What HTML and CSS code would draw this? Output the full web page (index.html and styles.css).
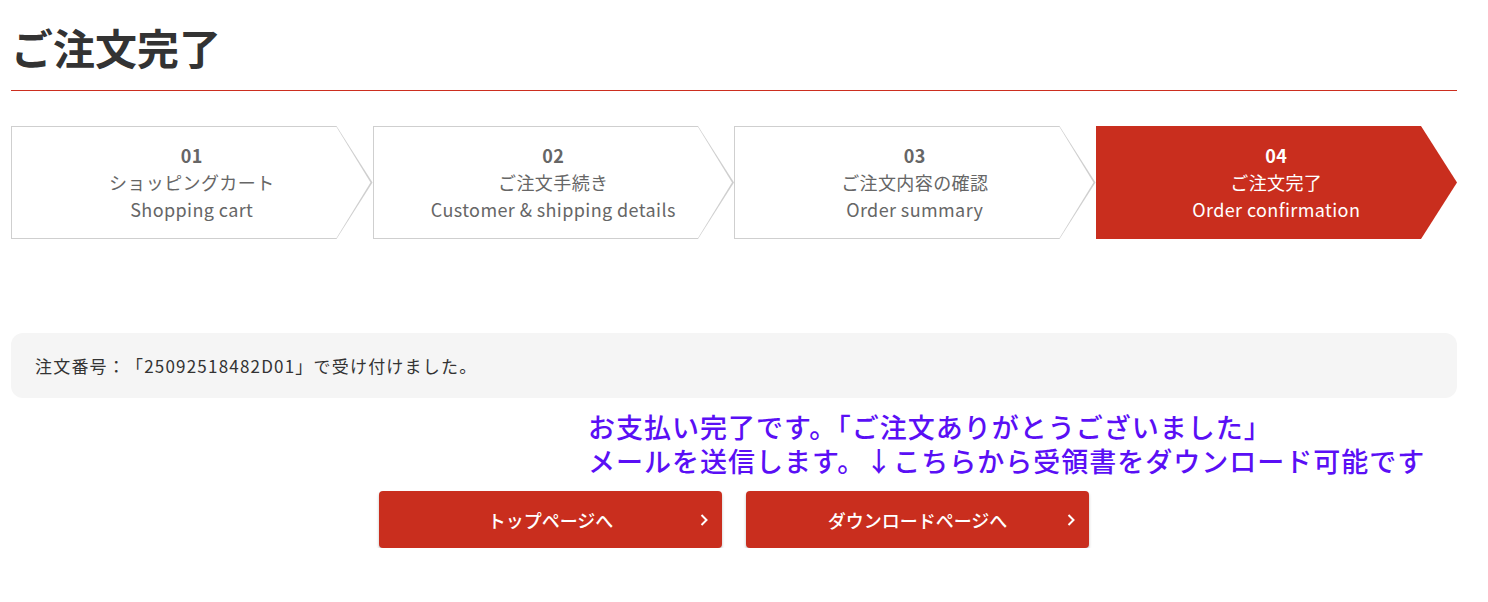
FILE: index.html
```html
<!DOCTYPE html>
<html lang="ja">
<head>
<meta charset="utf-8">
<title>ご注文完了</title>
<link rel="stylesheet" href="styles.css">
</head>
<body>
<main class="page">
  <h1 class="title">ご注文完了</h1>
  <ol class="steps">
    <li class="step">
      <div class="step-inner">
        <span class="step-num">01</span>
        <span class="step-ja">ショッピングカート</span>
        <span class="step-en">Shopping cart</span>
      </div>
    </li>
    <li class="step">
      <div class="step-inner">
        <span class="step-num">02</span>
        <span class="step-ja">ご注文手続き</span>
        <span class="step-en">Customer &amp; shipping details</span>
      </div>
    </li>
    <li class="step">
      <div class="step-inner">
        <span class="step-num">03</span>
        <span class="step-ja">ご注文内容の確認</span>
        <span class="step-en">Order summary</span>
      </div>
    </li>
    <li class="step is-current">
      <div class="step-inner">
        <span class="step-num">04</span>
        <span class="step-ja">ご注文完了</span>
        <span class="step-en">Order confirmation</span>
      </div>
    </li>
  </ol>

  <div class="notice">注文番号：「25092518482D01」で受け付けました。</div>

  <div class="memo">
    <p class="memo-line">お支払い完了です。「ご注文ありがとうございました」</p>
    <p class="memo-line">メールを送信します。↓こちらから受領書をダウンロード可能です</p>
  </div>

  <div class="actions">
    <a class="btn" href="#">トップページへ<span class="chev"><svg viewBox="0 0 10 14" width="10" height="14"><path d="M2.5 2 L7.5 7 L2.5 12" fill="none" stroke="#fff" stroke-width="2"/></svg></span></a>
    <a class="btn" href="#">ダウンロードページへ<span class="chev"><svg viewBox="0 0 10 14" width="10" height="14"><path d="M2.5 2 L7.5 7 L2.5 12" fill="none" stroke="#fff" stroke-width="2"/></svg></span></a>
  </div>
</main>
</body>
</html>
```

FILE: styles.css
```css
* { box-sizing: border-box; }
html, body { margin: 0; padding: 0; background: #fff; }
body {
  font-family: "Noto Sans CJK JP", "Noto Sans", sans-serif;
  color: #333;
}
.page {
  width: 1446px;
  margin-left: 11px;
  padding-top: 17px;
}
.title {
  margin: 0;
  padding: 0 0 14px 0;
  font-size: 42px;
  line-height: 59px;
  font-weight: 700;
  color: #333;
  border-bottom: 1px solid #cc2e1f;
}
.steps {
  list-style: none;
  margin: 35px 0 0;
  padding: 0;
  display: grid;
  grid-template-columns: repeat(4, 1fr);
}
.step {
  height: 113px;
  padding: 1px;
  background: #cfcfcf;
  clip-path: polygon(0 0, calc(100% - 36px) 0, 100% 50%, calc(100% - 36px) 100%, 0 100%);
}
.step-inner {
  height: 100%;
  background: #fff;
  clip-path: polygon(0 0, calc(100% - 35px) 0, calc(100% - 1px) 50%, calc(100% - 35px) 100%, 0 100%);
  display: flex;
  flex-direction: column;
  align-items: center;
  justify-content: center;
  color: #666;
  font-size: 18px;
  line-height: 27px;
  letter-spacing: 0.4px;
}
.step-num { font-weight: 700; }
.step.is-current { background: #c92e1e; }
.step.is-current .step-inner { background: #c92e1e; color: #fff; }

.notice {
  margin-top: 94px;
  height: 65px;
  background: #f5f5f5;
  border-radius: 12px;
  padding: 0 24px;
  display: flex;
  align-items: center;
  font-size: 17px;
  letter-spacing: 1.2px;
  text-spacing-trim: space-all;
  color: #333;
}
.memo {
  margin: 12px 0 0 577px;
  display: flex;
  flex-direction: column;
}
.memo-line {
  margin: 0;
  font-size: 27px;
  line-height: 34px;
  font-weight: 500;
  color: #5a0ff5;
  letter-spacing: 1px;
}
.actions {
  margin-top: 13px;
  display: flex;
  justify-content: center;
  gap: 24px;
}
.btn {
  position: relative;
  width: 343px;
  height: 57px;
  background: #c92e1e;
  border-radius: 4px;
  box-shadow: 0 2px 3px rgba(0,0,0,0.25);
  color: #fff;
  text-decoration: none;
  font-size: 18px;
  font-weight: 500;
  display: flex;
  align-items: center;
  justify-content: center;
}
.chev {
  position: absolute;
  right: 13px;
  top: 50%;
  transform: translateY(-50%);
  display: flex;
}
```
